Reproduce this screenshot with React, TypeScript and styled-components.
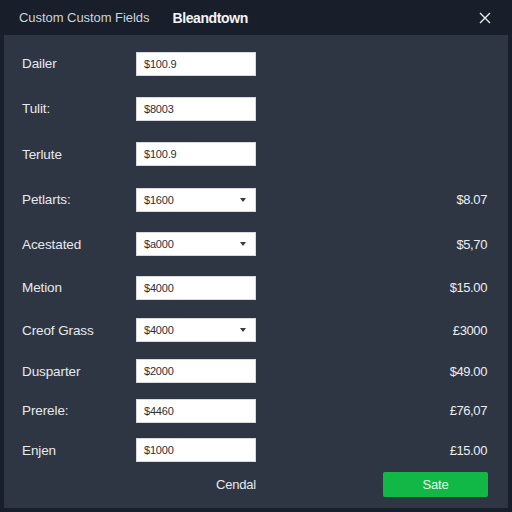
import React from "react";
import styled, { createGlobalStyle } from "styled-components";

const Global = createGlobalStyle`
  html, body { margin: 0; padding: 0; background: #181e2a; }
  body { font-family: "Liberation Sans", Arial, sans-serif; }
`;

const Page = styled.div`
  width: 512px;
  height: 512px;
  background: #181e2a;
  display: flex;
  flex-direction: column;
  overflow: hidden;
`;

const Header = styled.div`
  height: 35px;
  display: flex;
  align-items: center;
  padding: 0 20px 0 19px;
  box-sizing: border-box;
`;

const Title = styled.div`
  font-size: 13px;
  color: #cfd4dc;
  letter-spacing: -0.05px;
`;

const Brand = styled.div`
  font-size: 14px;
  font-weight: 700;
  color: #f2f4f7;
  margin-left: 23px;
  letter-spacing: -0.4px;
  flex: 1;
`;

const Close = styled.button`
  background: none;
  border: none;
  padding: 0;
  width: 14px;
  height: 14px;
  display: flex;
  cursor: pointer;
`;

const Panel = styled.div`
  margin: 0 4px;
  height: 473px;
  background: #2e3644;
  padding: 6px 20px 0 18px;
  box-sizing: border-box;
  display: flex;
  flex-direction: column;
`;

const Row = styled.div<{ $h: number }>`
  height: ${(p) => p.$h}px;
  display: grid;
  grid-template-columns: 114px 120px 1fr;
  align-items: center;
`;

const Label = styled.div`
  font-size: 13.5px;
  color: #e6e9ee;
  letter-spacing: -0.1px;
`;

const Field = styled.div`
  height: 24px;
  background: #ffffff;
  border: 1px solid #d6d9de;
  box-sizing: border-box;
  display: flex;
  align-items: center;
  justify-content: space-between;
  padding: 0 9px 0 7px;
  font-size: 11px;
  color: #2a2f38;
  letter-spacing: -0.2px;
`;

const Caret = styled.span`
  width: 0;
  height: 0;
  border-left: 3px solid transparent;
  border-right: 3px solid transparent;
  border-top: 4px solid #333a45;
`;

const Amount = styled.div`
  text-align: right;
  font-size: 13px;
  color: #eceef2;
  letter-spacing: -0.4px;
  padding-right: 1px;
`;

const Footer = styled.div`
  height: 28px;
  display: grid;
  grid-template-columns: 114px 120px 1fr;
  align-items: center;
`;

const Cancel = styled.button`
  grid-column: 2;
  justify-self: end;
  background: none;
  border: none;
  padding: 0;
  font-family: inherit;
  font-size: 13px;
  color: #e6e9ee;
  letter-spacing: -0.2px;
`;

const Save = styled.button`
  grid-column: 3;
  justify-self: end;
  width: 105px;
  height: 25px;
  background: #12b846;
  border: none;
  border-radius: 2px;
  color: #e8fbe9;
  font-family: inherit;
  font-size: 13px;
  letter-spacing: -0.2px;
`;

type R = { label: string; value: string; select?: boolean; amount?: string; h: number };

const rows: R[] = [
  { label: "Dailer", value: "$100.9", h: 45 },
  { label: "Tulit:", value: "$8003", h: 45 },
  { label: "Terlute", value: "$100.9", h: 46 },
  { label: "Petlarts:", value: "$1600", select: true, amount: "$8.07", h: 45 },
  { label: "Acestated", value: "$a000", select: true, amount: "$5,70", h: 44 },
  { label: "Metion", value: "$4000", amount: "$15.00", h: 43 },
  { label: "Creof Grass", value: "$4000", select: true, amount: "£3000", h: 42 },
  { label: "Dusparter", value: "$2000", amount: "$49.00", h: 40 },
  { label: "Prerele:", value: "$4460", amount: "£76,07", h: 39 },
  { label: "Enjen", value: "$1000", amount: "£15.00", h: 40 },
];

export default function App() {
  return (
    <Page>
      <Global />
      <Header>
        <Title>Custom Custom Fields</Title>
        <Brand>Bleandtown</Brand>
        <Close aria-label="close">
          <svg width="14" height="14" viewBox="0 0 14 14">
            <path d="M2 2 L12 12 M12 2 L2 12" stroke="#e9ecf0" strokeWidth="1.4" />
          </svg>
        </Close>
      </Header>
      <Panel>
        {rows.map((r) => (
          <Row key={r.label} $h={r.h}>
            <Label>{r.label}</Label>
            <Field>
              <span>{r.value}</span>
              {r.select && <Caret />}
            </Field>
            <Amount>{r.amount ?? ""}</Amount>
          </Row>
        ))}
        <Footer>
          <Cancel>Cendal</Cancel>
          <Save>Sate</Save>
        </Footer>
      </Panel>
    </Page>
  );
}
